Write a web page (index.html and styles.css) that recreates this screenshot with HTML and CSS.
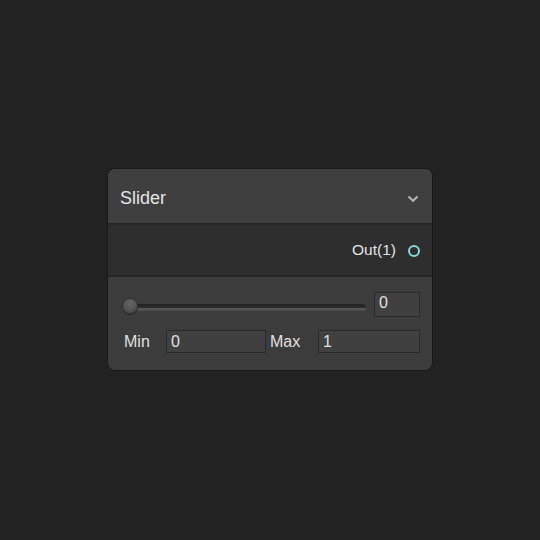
FILE: index.html
```html
<!DOCTYPE html>
<html>
<head>
<meta charset="utf-8">
<link rel="stylesheet" href="styles.css">
</head>
<body>
<div class="node">
  <div class="header">
    <span class="title">Slider</span>
    <svg class="chevron" width="12" height="8" viewBox="0 0 12 8"><path d="M1.5 1.5 L6 5.8 L10.5 1.5" fill="none" stroke="#b4b4b4" stroke-width="2"/></svg>
  </div>
  <div class="ports">
    <span class="port-label">Out(1)</span>
    <span class="port-dot"></span>
  </div>
  <div class="content">
    <div class="slider-row">
      <div class="track"><div class="thumb"></div></div>
      <div class="field field-value">0</div>
    </div>
    <div class="range-row">
      <span class="lbl lbl-min">Min</span>
      <div class="field field-min">0</div>
      <span class="lbl lbl-max">Max</span>
      <div class="field field-max">1</div>
    </div>
  </div>
</div>
</body>
</html>
```
FILE: styles.css
```css
html, body {
  margin: 0;
  padding: 0;
  background: #222222;
}
body {
  height: 540px;
  display: flex;
  align-items: center;
  justify-content: center;
  font-family: "Liberation Sans", Arial, sans-serif;
  color: #e2e2e2;
}
.node {
  width: 324px;
  border: 1px solid #191919;
  border-radius: 8px;
  overflow: hidden;
  background: #3c3c3c;
  margin-top: -1px;
}
.header {
  height: 54px;
  background: #3f3f3f;
  border-bottom: 2px solid #272727;
  display: flex;
  align-items: center;
  justify-content: space-between;
  padding: 0 13px 0 12px;
}
.title {
  font-size: 18px;
  color: #e4e4e4;
  padding-top: 4px;
}
.chevron {
  display: block;
  margin-top: 5px;
}
.ports {
  height: 50px;
  background: #2e2e2e;
  border-bottom: 2px solid #272727;
  display: flex;
  align-items: center;
  justify-content: flex-end;
  padding-right: 12px;
  gap: 12px;
}
.port-label {
  font-size: 15.5px;
  color: #e2e2e2;
}
.port-dot {
  width: 8px;
  height: 8px;
  border: 2px solid #80dcdc;
  border-radius: 50%;
  margin-top: 1px;
}
.content {
  height: 93px;
  box-sizing: border-box;
  padding: 15px 12px 0 14px;
  display: flex;
  flex-direction: column;
  gap: 13px;
}
.slider-row {
  height: 25px;
  display: flex;
  align-items: center;
  gap: 8px;
}
.track {
  flex: 1;
  height: 7px;
  margin-top: 5px;
  border-radius: 3.5px;
  background: linear-gradient(#242424 0%, #2b2b2b 50%, #575757 62%, #4c4c4c 100%);
  position: relative;
}
.thumb {
  position: absolute;
  left: 0;
  top: -6px;
  width: 14px;
  height: 14px;
  border-radius: 50%;
  border: 1px solid #333;
  background: radial-gradient(circle at 50% 30%, #656565 0%, #575757 45%, #424242 100%);
  box-shadow: 0 1px 1px rgba(0,0,0,0.3);
}
.field {
  box-sizing: border-box;
  border: 1px solid #2a2a2a;
  background: #404040;
  font-size: 16px;
  color: #e0e0e0;
  padding-left: 4px;
  display: flex;
  align-items: center;
}
.field-value {
  width: 46px;
  height: 25px;
  padding-bottom: 3px;
}
.range-row {
  height: 23px;
  display: flex;
  align-items: center;
}
.lbl {
  font-size: 16px;
  color: #e0e0e0;
  padding-top: 1px;
}
.lbl-min {
  width: 42px;
  padding-left: 2px;
}
.lbl-max {
  width: 52px;
  box-sizing: border-box;
  padding-left: 4px;
}
.field-min {
  width: 100px;
  height: 23px;
}
.field-max {
  flex: 1;
  height: 23px;
}
```
